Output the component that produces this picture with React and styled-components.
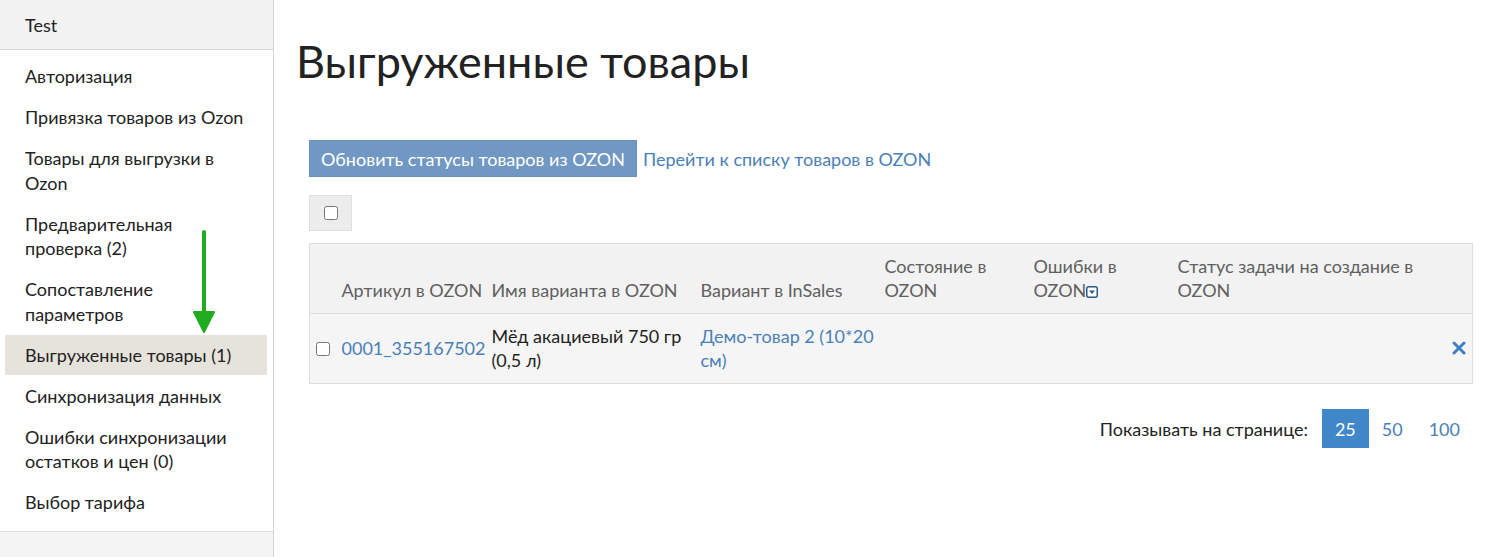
import React from 'react';
import styled, { createGlobalStyle } from 'styled-components';

const GlobalStyle = createGlobalStyle`
  html, body {
    margin: 0;
    padding: 0;
    background: #fff;
  }
  body {
    font-family: Lato, "Open Sans", "Liberation Sans", sans-serif;
    font-size: 18px;
    color: #222;
  }
`;

const Layout = styled.div`
  display: flex;
  min-height: 557px;
`;

const StyledSidebar = styled.aside`
  position: relative;
  width: 273px;
  flex-shrink: 0;
  border-right: 1px solid #d4d4d4;
  background: #f4f4f4;
  display: flex;
  flex-direction: column;
`;

const SidebarHeader = styled.div`
  height: 49px;
  padding: 0 25px;
  display: flex;
  align-items: center;
  background: #f2f2f2;
  border-bottom: 1px solid #d8d8d8;
  font-size: 18px;
`;

const Menu = styled.ul`
  list-style: none;
  margin: 0;
  padding: 6px 0 8px;
  background: #fff;
  border-bottom: 1px solid #e0e0e0;
`;

const MenuItem = styled.li`
  margin: 0 6px 0.5px 5px;
  padding: 8px 15px 8px 20px;
  line-height: 24.5px;
  font-size: 18px;
  color: #222;
  background: ${props => (props.$active ? '#e6e3dc' : 'transparent')};
`;

const Arrow = styled.svg`
  position: absolute;
  left: 192px;
  top: 230px;
`;

const Main = styled.main`
  flex: 1;
  padding: 28px 39px 40px 22px;
`;

const Title = styled.h1`
  margin: 0 0 46px;
  font-size: 45px;
  font-weight: 400;
  line-height: 66px;
  color: #222;
`;

const Content = styled.div`
  padding-left: 13px;
`;

const Actions = styled.div`
  display: flex;
  align-items: center;
  gap: 6px;
`;

const Button = styled.button`
  height: 37px;
  padding: 0 11px;
  border: 1px solid #6c93be;
  background: #7198c3;
  color: #fff;
  font-family: inherit;
  font-size: 18px;
  cursor: pointer;
`;

const Link = styled.a`
  color: #4a80b8;
  text-decoration: none;
  font-size: 18px;
`;

const SelectAll = styled.div`
  width: 43px;
  height: 36px;
  margin-top: 18px;
  display: flex;
  align-items: center;
  justify-content: center;
  background: #ececec;
  border: 1px solid #e0e0e0;
  box-sizing: border-box;
`;

const Check = styled.input.attrs({ type: 'checkbox' })`
  width: 14px;
  height: 14px;
  margin: 0;
`;

const Table = styled.table`
  width: 100%;
  margin-top: 12px;
  border-collapse: collapse;
  table-layout: fixed;
  border: 1px solid #dedede;
`;

const HeadRow = styled.tr`
  background: #f2f2f2;
  border-bottom: 1px solid #dedede;
`;

const Th = styled.th`
  box-sizing: border-box;
  padding: 10px 2px 11px 6px;
  text-align: left;
  vertical-align: bottom;
  font-weight: 400;
  font-size: 18px;
  line-height: 24px;
  color: #606060;
  width: ${props => props.$w || 'auto'};
`;

const Row = styled.tr`
  background: #f5f5f5;
`;

const Td = styled.td`
  padding: 10px 2px 11px 6px;
  vertical-align: middle;
  font-size: 18px;
  line-height: 24px;
  color: #222;
`;

const CheckCell = styled(Td)`
  padding: 0 0 0 6px;
`;

const CellLink = styled.a`
  color: #4a80b8;
  text-decoration: none;
`;

const FilterIcon = styled.svg`
  display: inline-block;
  vertical-align: -1px;
`;

const RemoveCell = styled(Td)`
  text-align: right;
  padding-right: 6px;
`;

const Pager = styled.div`
  display: flex;
  justify-content: flex-end;
  align-items: center;
  margin-top: 25px;
  font-size: 18px;
`;

const PagerLabel = styled.span`
  margin-right: 14px;
  color: #222;
`;

const PageSize = styled.span`
  padding: 0 13px;
  height: 39px;
  display: flex;
  align-items: center;
  background: ${props => (props.$active ? '#3f87c8' : 'transparent')};
  color: ${props => (props.$active ? '#fff' : '#4a80b8')};
`;

const menu = [
  { label: 'Авторизация' },
  { label: 'Привязка товаров из Ozon' },
  { label: 'Товары для выгрузки в Ozon' },
  { label: 'Предварительная проверка (2)' },
  { label: 'Сопоставление параметров' },
  { label: 'Выгруженные товары (1)', active: true },
  { label: 'Синхронизация данных' },
  { label: 'Ошибки синхронизации остатков и цен (0)' },
  { label: 'Выбор тарифа' },
];

const App = () => (
  <>
    <GlobalStyle />
    <Layout>
      <StyledSidebar>
        <SidebarHeader>Test</SidebarHeader>
        <Menu>
          {menu.map(item => (
            <MenuItem key={item.label} $active={item.active}>{item.label}</MenuItem>
          ))}
        </Menu>
        <Arrow width="24" height="106" viewBox="0 0 24 106">
          <line x1="12" y1="2" x2="12" y2="86" stroke="#1fad1f" strokeWidth="4" strokeLinecap="round" />
          <polygon points="2,82 22,82 12,102" fill="#1fad1f" stroke="#1fad1f" strokeWidth="2" strokeLinejoin="round" />
        </Arrow>
      </StyledSidebar>

      <Main>
        <Title>Выгруженные товары</Title>
        <Content>
          <Actions>
            <Button>Обновить статусы товаров из OZON</Button>
            <Link href="#">Перейти к списку товаров в OZON</Link>
          </Actions>

          <SelectAll>
            <Check />
          </SelectAll>

          <Table>
            <thead>
              <HeadRow>
                <Th $w="26px" />
                <Th $w="150px">Артикул в OZON</Th>
                <Th $w="209px">Имя варианта в OZON</Th>
                <Th $w="184px">Вариант в InSales</Th>
                <Th $w="149px">Состояние в OZON</Th>
                <Th $w="144px">
                  Ошибки в OZON
                  <FilterIcon width="12" height="12" viewBox="0 0 12 12">
                    <rect x="0.75" y="0.75" width="10.5" height="10.5" rx="2" fill="#fff" stroke="#2c5a88" strokeWidth="1.5" />
                    <polygon points="3,4.5 9,4.5 6,8" fill="#2c5a88" />
                  </FilterIcon>
                </Th>
                <Th $w="269px">Статус задачи на создание в OZON</Th>
                <Th />
              </HeadRow>
            </thead>
            <tbody>
              <Row>
                <CheckCell><Check /></CheckCell>
                <Td><CellLink href="#">0001_355167502</CellLink></Td>
                <Td>Мёд акациевый 750 гр (0,5 л)</Td>
                <Td><CellLink href="#">Демо-товар 2 (10*20 см)</CellLink></Td>
                <Td />
                <Td />
                <Td />
                <RemoveCell>
                  <svg width="14" height="14" viewBox="0 0 14 14">
                    <path d="M2 2 L12 12 M12 2 L2 12" stroke="#3f80c0" strokeWidth="3" strokeLinecap="round" />
                  </svg>
                </RemoveCell>
              </Row>
            </tbody>
          </Table>

          <Pager>
            <PagerLabel>Показывать на странице:</PagerLabel>
            <PageSize $active>25</PageSize>
            <PageSize>50</PageSize>
            <PageSize>100</PageSize>
          </Pager>
        </Content>
      </Main>
    </Layout>
  </>
);

export default App;
